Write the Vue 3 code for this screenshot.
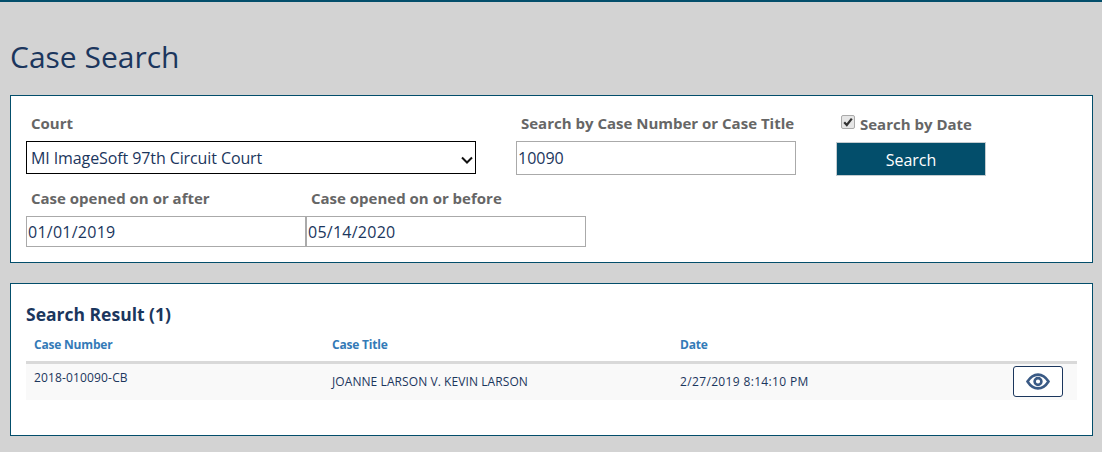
<script setup>
const court = 'MI ImageSoft 97th Circuit Court'
const rows = [{ number: '2018-010090-CB', title: 'JOANNE LARSON V. KEVIN LARSON', date: '2/27/2019 8:14:10 PM' }]
</script>

<template>
  <div class="page">
    <h1 class="title">Case Search</h1>
    <section class="panel search">
      <div class="row first">
        <div class="field court">
          <label class="lbl">Court</label>
          <div class="select">
            <span>{{ court }}</span>
            <svg class="chev" width="14" height="9" viewBox="0 0 14 9"><path d="M2 1.500 7 6.500l5-5" fill="none" stroke="#111" stroke-width="2"/></svg>
          </div>
        </div>
        <div class="field number">
          <label class="lbl">Search by Case Number or Case Title</label>
          <input class="inp big" value="10090" />
        </div>
        <div class="field action">
          <label class="check">
            <span class="box">
              <svg width="10" height="10" viewBox="0 0 10 10"><path d="M1.200 5.200 3.800 8 8.800 1.600" fill="none" stroke="#333" stroke-width="2.200"/></svg>
            </span>
            Search by Date
          </label>
          <button class="btn">Search</button>
        </div>
      </div>
      <div class="row second">
        <div class="field date">
          <label class="lbl">Case opened on or after</label>
          <input class="inp spaced" value="01/01/2019" />
        </div>
        <div class="field date">
          <label class="lbl">Case opened on or before</label>
          <input class="inp spaced" value="05/14/2020" />
        </div>
      </div>
    </section>
    <section class="panel result">
      <h2 class="sub">Search Result (1)</h2>
      <div class="thead">
        <span>Case Number</span><span>Case Title</span><span>Date</span>
      </div>
      <div v-for="r in rows" :key="r.number" class="tr">
        <span class="num">{{ r.number }}</span>
        <span class="case">{{ r.title }}</span>
        <span class="when">{{ r.date }}</span>
        <button class="view" aria-label="View">
          <svg width="24" height="17" viewBox="0 0 24 17"><path d="M1.500 8.500C4.500 3.800 8 1.600 12 1.600S19.500 3.800 22.500 8.500C19.500 13.200 16 15.400 12 15.400S4.500 13.200 1.500 8.500Z" fill="none" stroke="#3a5a85" stroke-width="2.600"/><circle cx="12" cy="8.500" r="3.400" fill="none" stroke="#3a5a85" stroke-width="2.600"/></svg>
        </button>
      </div>
    </section>
  </div>
</template>

<style>
html, body { margin: 0; background: #d3d3d3; }
</style>

<style scoped>
.page {
  box-sizing: border-box;
  height: 452px;
  overflow: hidden;
  border-top: 2px solid #034e6b;
  background: #d3d3d3;
  padding: 0 9px 0 10px;
  font-family: "Open Sans", "Noto Sans", sans-serif;
  color: #1b365d;
}
.title {
  margin: 0;
  padding-top: 36px;
  height: 57px;
  font-size: 30px;
  line-height: 38px;
  font-weight: 400;
  color: #1b365d;
  box-sizing: content-box;
}
.panel {
  box-sizing: border-box;
  background: #fff;
  border: 1px solid #034e6b;
}
.search { height: 168px; padding: 0 15px; }
.row { display: flex; }
.first { height: 63px; padding-top: 17px; }
.second { padding-top: 12px; }
.field { display: flex; flex-direction: column; }
.lbl {
  height: 28px;
  line-height: 20px;
  padding-left: 5px;
  font-size: 15px;
  font-weight: 700;
  color: #666;
}
.court { width: 490px; }
.select {
  box-sizing: border-box;
  width: 450px;
  height: 33px;
  border: 1px solid #000;
  padding-left: 4px;
  display: flex;
  align-items: center;
  justify-content: space-between;
  font-size: 16px;
  letter-spacing: -0.1px;
  color: #1b365d;
}
.chev { margin-right: 1px; margin-top: 5px; }
.number { width: 320px; }
.inp {
  box-sizing: border-box;
  width: 280px;
  height: 31px;
  border: 1px solid #aaa;
  padding: 0 1px;
  margin: 0;
  outline: none;
  font: inherit;
  font-size: 16px;
  color: #1b365d;
  background: #fff;
}
.spaced { letter-spacing: 0.25px; }
.big { height: 34px; }
.action { width: 150px; margin-top: -5px; }
.check {
  display: flex;
  align-items: center;
  gap: 5px;
  height: 31px;
  padding-left: 5px;
  font-size: 15px;
  font-weight: 700;
  color: #666;
}
.box {
  box-sizing: border-box;
  width: 14px;
  height: 14px;
  margin-top: -4px;
  border: 1px solid #aaa;
  border-radius: 2px;
  background: #e6e6e6;
  display: flex;
  align-items: center;
  justify-content: center;
}
.btn {
  box-sizing: border-box;
  width: 150px;
  height: 34px;
  margin-top: 3px;
  padding: 1px 0 0;
  border: 1px solid #c4ccd0;
  background: #034e6b;
  color: #fff;
  font: inherit;
  font-size: 16px;
}
.result { height: 153px; margin-top: 20px; padding: 0 15px; }
.sub {
  margin: 0;
  padding-top: 18px;
  height: 27px;
  box-sizing: content-box;
  font-size: 17.5px;
  line-height: 24px;
  font-weight: 700;
  color: #1b365d;
}
.thead, .tr {
  display: grid;
  grid-template-columns: 298px 348px 333px 50px;
  padding-left: 8px;
  padding-right: 14px;
}
.thead {
  height: 29px;
  border-bottom: 3px solid #d9d9d9;
  align-items: start;
  font-size: 12px;
  line-height: 26px;
  font-weight: 700;
  letter-spacing: -0.2px;
  color: #337ab7;
  box-sizing: content-box;
  margin-top: 3px;
}
.tr {
  box-sizing: border-box;
  height: 36px;
  padding-bottom: 1px;
  align-items: center;
  background: #f9f9f9;
  font-size: 12px;
  color: #1b365d;
}
.num { margin-top: -8px; letter-spacing: 0.15px; }
.case { letter-spacing: 0.08px; }
.when { letter-spacing: 0.35px; }
.view {
  box-sizing: border-box;
  width: 50px;
  height: 31px;
  padding: 0;
  border: 1px solid #1b365d;
  border-radius: 3px;
  background: #fff;
  display: flex;
  align-items: center;
  justify-content: center;
}
</style>
